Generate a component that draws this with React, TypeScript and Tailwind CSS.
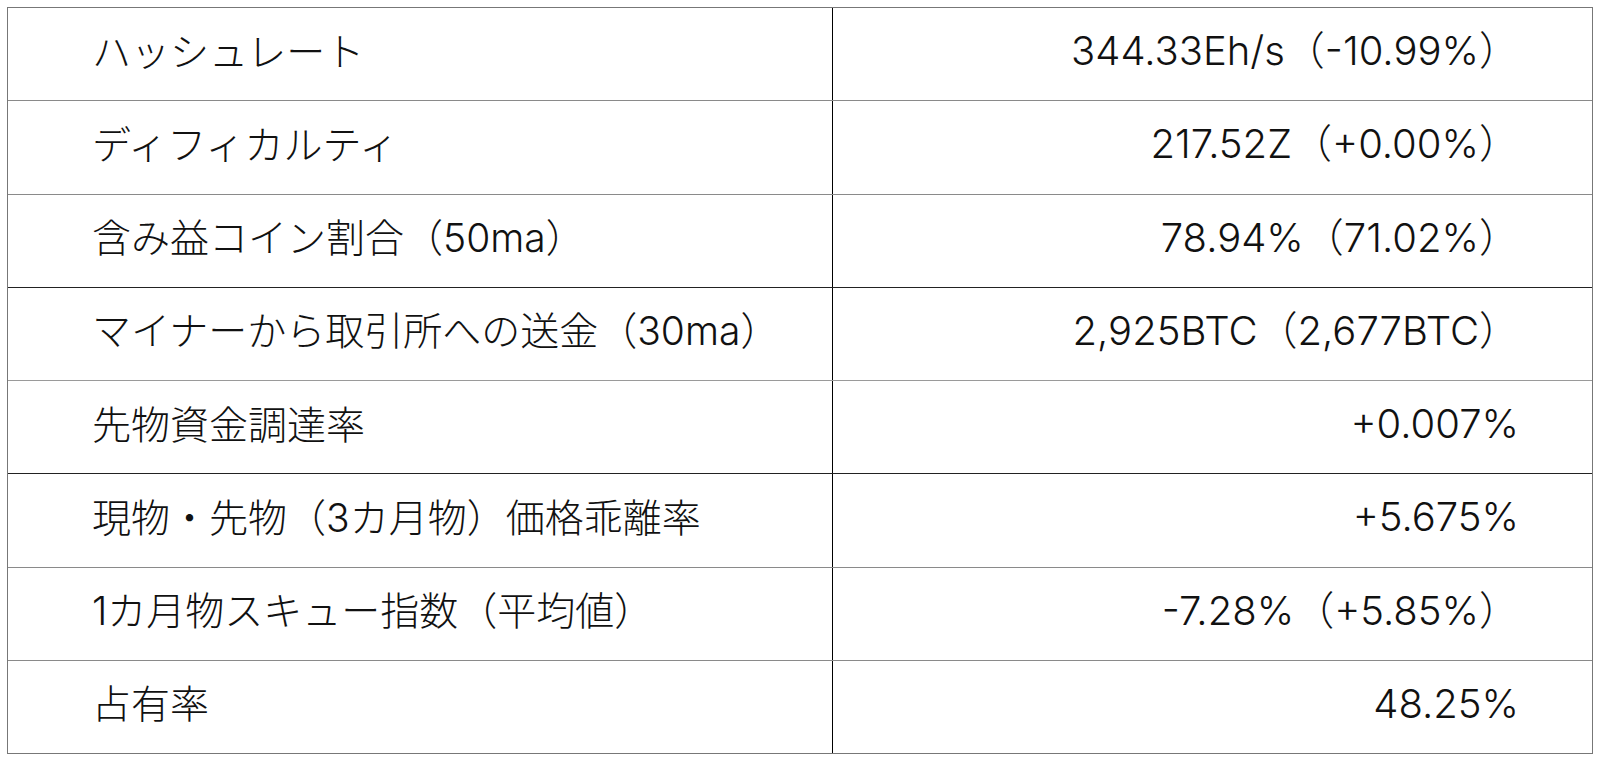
const ROWS = [
  { label: 'ハッシュレート', value: '344.33Eh/s（-10.99%）', line: 'border-[#8a8a8a]' },
  { label: 'ディフィカルティ', value: '217.52Z（+0.00%）', line: 'border-[#8a8a8a]' },
  { label: '含み益コイン割合（50ma）', value: '78.94%（71.02%）', line: 'border-[#222]' },
  { label: 'マイナーから取引所への送金（30ma）', value: '2,925BTC（2,677BTC）', line: 'border-[#9a9a9a]' },
  { label: '先物資金調達率', value: '+0.007%', line: 'border-[#222]' },
  { label: '現物・先物（3カ月物）価格乖離率', value: '+5.675%', line: 'border-[#8a8a8a]' },
  { label: '1カ月物スキュー指数（平均値）', value: '-7.28%（+5.85%）', line: 'border-[#8a8a8a]' },
  { label: '占有率', value: '48.25%', line: 'border-[#777]' },
]

export default function App() {
  return (
    <div className="min-h-[761px] w-[1600px] bg-white pt-[7px] pl-[7px] font-['Inter','Noto_Sans_CJK_JP',sans-serif] font-light text-[#111]">
      <div className="w-[1586px] border-x border-t border-[#777]">
        {ROWS.map((row) => (
          <div key={row.label} className={`flex h-[93.25px] border-b ${row.line}`}>
            <div className="flex w-[825px] shrink-0 items-center border-r border-black pb-1.5 pl-[84px] text-[39px] leading-none">
              {row.label}
            </div>
            <div className="flex flex-1 items-center justify-end pb-1.5 pr-[73px] text-[40px] leading-none">
              {row.value}
            </div>
          </div>
        ))}
      </div>
    </div>
  )
}
